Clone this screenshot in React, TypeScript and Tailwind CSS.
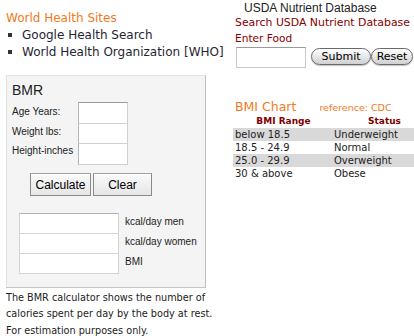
import React from "react";

const V = "font-['DejaVu_Sans',Verdana,sans-serif]";
const A = "font-['Liberation_Sans',Arial,sans-serif]";

function Bullet({ children }: { children: React.ReactNode }) {
  return (
    <li className="flex items-center h-[17px] whitespace-nowrap">
      <span className="w-[4px] h-[4px] bg-[#333] ml-[2px] mr-[10px] shrink-0" />
      <span>{children}</span>
    </li>
  );
}

export default function App() {
  return (
    <div className="w-[414px] h-[336px] overflow-hidden bg-white flex text-[#222]">
      {/* Left column */}
      <div className={`ml-[6px] w-[204px] shrink-0 pt-[10px] ${V}`}>
        <div className="text-[12px] leading-[16px] text-[#f07a22]">World Health Sites</div>
        <ul className="text-[12px] text-[#1f2533]">
          <Bullet>Google Health Search</Bullet>
          <Bullet>World Health Organization [WHO]</Bullet>
        </ul>

        <div className={`mt-[15px] w-[200px] h-[213px] bg-[#f4f4f4] border border-[#e2e2e2] border-r-[#bdbdbd] border-b-[#c4c4c4] ${A}`}>
          <div className="pl-[5px] pt-[6px] text-[14px] leading-[16px] text-[#222]">BMR</div>
          <div className="flex mt-[4px]">
            <div className="pl-[5px] w-[71px] text-[10px] text-[#222]">
              <div className="h-[19.5px] flex items-center">Age Years:</div>
              <div className="h-[19.5px] flex items-center">Weight lbs:</div>
              <div className="h-[19.5px] flex items-center">Height-inches</div>
            </div>
            <div className="flex flex-col">
              <div className="w-[50px] h-[22px] bg-white border border-[#d0d0d0] border-t-[#9a9a9a] border-l-[#b5b5b5]" />
              <div className="w-[50px] h-[21px] -mt-[1px] bg-white border border-[#d0d0d0] border-l-[#b5b5b5]" />
              <div className="w-[50px] h-[22px] -mt-[1px] bg-white border border-[#d0d0d0] border-l-[#b5b5b5]" />
            </div>
          </div>
          <div className="flex gap-[2px] ml-[23px] mt-[8px]">
            <button className="w-[61px] h-[23px] border border-[#8a8a8a] border-t-[#a0a0a0] bg-gradient-to-b from-[#fafafa] to-[#e6e6e6] text-[12px] text-black shadow-[inset_0_1px_0_#fff]">
              Calculate
            </button>
            <button className="w-[59px] h-[23px] border border-[#8a8a8a] border-t-[#a0a0a0] bg-gradient-to-b from-[#fafafa] to-[#e6e6e6] text-[12px] text-black shadow-[inset_0_1px_0_#fff]">
              Clear
            </button>
          </div>
          <div className="flex mt-[17px] ml-[12px]">
            <div className="flex flex-col">
              <div className="w-[100px] h-[21px] bg-white border border-[#d4d4d4] border-t-[#b0b0b0]" />
              <div className="w-[100px] h-[21px] -mt-[1px] bg-white border border-[#d4d4d4]" />
              <div className="w-[100px] h-[21px] -mt-[1px] bg-white border border-[#d4d4d4]" />
            </div>
            <div className="ml-[6px] text-[10px] text-[#222] -mt-[2px]">
              <div className="h-[20px] flex items-center">kcal/day men</div>
              <div className="h-[20px] flex items-center">kcal/day women</div>
              <div className="h-[20px] flex items-center">BMI</div>
            </div>
          </div>
        </div>

        <div className="mt-[1.5px] text-[9.7px] leading-[16.5px] text-[#222] whitespace-nowrap">
          <div>The BMR calculator shows the number of</div>
          <div>calories spent per day by the body at rest.</div>
          <div>For estimation purposes only.</div>
        </div>
      </div>

      {/* Right column */}
      <div className={`ml-[25px] w-[200px] shrink-0 ${V}`}>
        <div className={`pl-[9px] text-[12px] leading-[14px] pt-[1px] text-[#222] whitespace-nowrap ${A}`}>USDA Nutrient Database</div>
        <div className="text-[10.9px] leading-[15px] text-[#850000] whitespace-nowrap">Search USDA Nutrient Database</div>
        <div className="mt-[1px] text-[10.6px] leading-[15px] text-[#850000]">Enter Food</div>
        <div className="flex items-start mt-[1px]">
          <div className="ml-[1px] w-[70px] h-[21px] bg-white border border-[#c8c8c8] border-t-[#9a9a9a]" />
          <button className="ml-[5px] mt-[1px] w-[60px] h-[17px] rounded-full border border-[#6a6a6a] bg-gradient-to-b from-[#ffffff] via-[#e8e8e8] to-[#d0d0d0] text-[11px] leading-[15px] text-black shadow-[0_1px_1px_rgba(0,0,0,0.25)]">
            Submit
          </button>
          <button className="w-[42px] h-[17px] mt-[1px] rounded-full border border-[#6a6a6a] bg-gradient-to-b from-[#ffffff] via-[#e8e8e8] to-[#d0d0d0] text-[11px] leading-[15px] text-black shadow-[0_1px_1px_rgba(0,0,0,0.25)]">
            Reset
          </button>
        </div>

        <div className="mt-[31px] flex items-baseline">
          <span className="text-[12.5px] leading-[16px] text-[#f07a22]">BMI Chart</span>
          <span className="ml-[23px] text-[9.5px] text-[#f07a22]">reference: CDC</span>
        </div>
        <table className="-ml-[2px] w-[202px] text-[10px] border-collapse">
          <thead>
            <tr className="h-[13px] text-[9px] font-bold text-[#800000]">
              <th className="w-[101px] text-center p-0 leading-[13px]">BMI Range</th>
              <th className="w-[101px] text-center p-0 leading-[13px]">Status</th>
            </tr>
          </thead>
          <tbody className="text-[#222]">
            <tr className="h-[13px] bg-[#d9d9d9]">
              <td className="p-0 pl-[2px] leading-[13px]">below 18.5</td>
              <td className="p-0 leading-[13px]">Underweight</td>
            </tr>
            <tr className="h-[13px]">
              <td className="p-0 pl-[2px] leading-[13px]">18.5 - 24.9</td>
              <td className="p-0 leading-[13px]">Normal</td>
            </tr>
            <tr className="h-[13px] bg-[#d9d9d9]">
              <td className="p-0 pl-[2px] leading-[13px]">25.0 - 29.9</td>
              <td className="p-0 leading-[13px]">Overweight</td>
            </tr>
            <tr className="h-[13px]">
              <td className="p-0 pl-[2px] leading-[13px]">30 &amp; above</td>
              <td className="p-0 leading-[13px]">Obese</td>
            </tr>
          </tbody>
        </table>
      </div>
    </div>
  );
}
